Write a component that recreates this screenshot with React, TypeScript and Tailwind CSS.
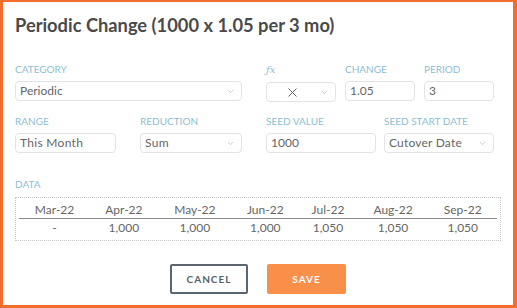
import React from 'react';
import { ChevronDown, X } from 'lucide-react';

const months = ['Mar-22', 'Apr-22', 'May-22', 'Jun-22', 'Jul-22', 'Aug-22', 'Sep-22'];
const values = ['-', '1,000', '1,000', '1,000', '1,050', '1,050', '1,050'];

const Label: React.FC<{ children: React.ReactNode; className?: string }> = ({ children, className }) => (
  <div className={`text-[10px] leading-[12px] text-[#8dbdd3] mb-[6px] ${className ?? ''}`}>{children}</div>
);

const Box: React.FC<{ children?: React.ReactNode; select?: boolean; className?: string }> = ({ children, select, className }) => (
  <div className={`h-[20px] flex items-center justify-between pl-[4px] pr-[6px] border border-[#e3e3e3] rounded-[4px] text-[12px] text-[#666] ${className ?? ''}`}>
    {children}
    {select && <ChevronDown size={9} strokeWidth={1.5} className="text-[#aaa] shrink-0" />}
  </div>
);

export default function App() {
  return (
    <div
      className="w-[517px] h-[308px] bg-white border-[#f36d2b] border-t-2 border-l-[3px] border-r-[4px] border-b-[3px] pl-3 pt-[12px]"
      style={{ fontFamily: 'Lato, "Open Sans", sans-serif' }}
    >
      {/* title */}
      <h1 className="text-[18.3px] leading-[22px] font-bold text-[#4a4a4a]">Periodic Change (1000 x 1.05 per 3 mo)</h1>

      {/* row 1 */}
      <div className="flex mt-[27px]">
        <div className="w-[227px]">
          <Label>CATEGORY</Label>
          <Box select>Periodic</Box>
        </div>
        <div className="w-[70px] ml-[24px]">
          <Label className="italic">
            <span style={{ fontFamily: '"DejaVu Serif", serif' }}>ƒx</span>
          </Label>
          <Box select>
            <span className="flex-1 flex justify-center pr-[6px]">
              <X size={15} strokeWidth={1.3} className="text-[#444]" />
            </span>
          </Box>
        </div>
        <div className="w-[70px] ml-[9px]">
          <Label>CHANGE</Label>
          <Box>1.05</Box>
        </div>
        <div className="w-[70px] ml-[9px]">
          <Label>PERIOD</Label>
          <Box>3</Box>
        </div>
      </div>

      {/* row 2 */}
      <div className="flex mt-[13px]">
        <div className="w-[101px]">
          <Label>RANGE</Label>
          <Box className="tracking-[0.3px]">This Month</Box>
        </div>
        <div className="w-[102px] ml-[24px]">
          <Label>REDUCTION</Label>
          <Box select className="tracking-[0.3px]">Sum</Box>
        </div>
        <div className="w-[110px] ml-[24px]">
          <Label>SEED VALUE</Label>
          <Box>1000</Box>
        </div>
        <div className="w-[110px] ml-[8px]">
          <Label>SEED START DATE</Label>
          <Box select className="tracking-[0.2px]">Cutover Date</Box>
        </div>
      </div>

      {/* data */}
      <div className="mt-[25px]">
        <Label className="mb-[7px]">DATA</Label>
        <div className="w-[486px] border border-dotted border-[#c8c8c8] px-[3px]">
          <table className="w-full text-[12px] text-[#666] border-collapse">
            <thead>
              <tr>
                {months.map((m) => (
                  <th key={m} className="font-normal pt-[4px] leading-[16px] border-b border-[#8a8a8a]">{m}</th>
                ))}
              </tr>
            </thead>
            <tbody>
              <tr>
                {values.map((v, i) => (
                  <td key={i} className="text-center leading-[16px] pt-px pb-[4px]">{v}</td>
                ))}
              </tr>
            </tbody>
          </table>
        </div>
      </div>

      {/* buttons */}
      <div className="flex justify-center gap-[19px] mt-[23px] pr-3">
        <button className="w-[78px] h-[30px] border-2 border-[#5c6670] rounded-[2px] text-[10px] font-bold tracking-[1px] text-[#555f6a]">
          CANCEL
        </button>
        <button className="w-[79px] h-[30px] bg-[#f8904a] rounded-[2px] text-[10px] font-bold tracking-[1px] text-white">
          SAVE
        </button>
      </div>
    </div>
  );
}
